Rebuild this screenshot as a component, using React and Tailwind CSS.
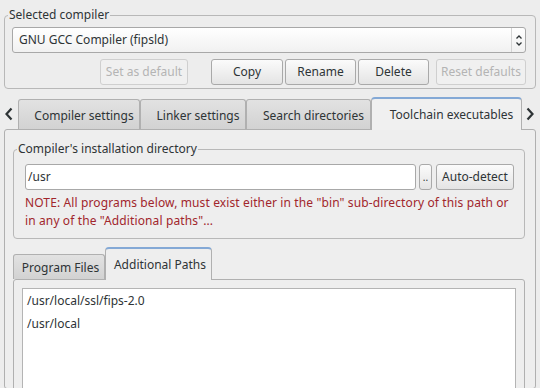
import React from "react";

const Btn = ({ children, w, className = "", disabled }) => (
    <div
        className={
            "h-[26px] flex items-center justify-center rounded-[3px] border " +
            (disabled
                ? "border-[#cfcfcf] bg-[#f0f0f0] text-[#b4b4b4] "
                : "border-[#a9a9a9] bg-gradient-to-b from-[#fbfbfb] to-[#e4e4e4] text-[#2e3436] ") +
            w +
            " " +
            className
        }
    >
        {children}
    </div>
);

const Chevron = ({ dir }) => (
    <svg width="10" height="14" viewBox="0 0 10 14" className="text-[#2e3436]">
        <polyline
            points={dir === "left" ? "7.5,1.5 2.5,7 7.5,12.5" : "2.5,1.5 7.5,7 2.5,12.5"}
            fill="none"
            stroke="currentColor"
            strokeWidth="2.2"
        />
    </svg>
);

const Tab = ({ label, w, active }) =>
    active ? (
        <div
            className={
                "relative z-10 -mb-px h-[33px] flex items-center justify-center pl-[10px] rounded-t-[4px] border border-b-0 border-[#b0b0b0] border-t-2 border-t-[#84a9d6] bg-[#f0f0f0] " +
                w
            }
        >
            {label}
        </div>
    ) : (
        <div
            className={
                "h-[30px] flex items-center justify-center pl-[10px] pt-[3px] rounded-t-[3px] border border-b-0 border-[#b0b0b0] bg-gradient-to-b from-[#e2e2e2] to-[#d2d2d2] " +
                w
            }
        >
            {label}
        </div>
    );

export default function App() {
    return (
        <div className="w-[540px] h-[388px] overflow-hidden bg-[#ededed] font-['Noto_Sans',sans-serif] text-[12px] text-[#2e3436]">
            {/* Selected compiler */}
            <fieldset className="mx-[4px] mt-[7px] p-0 border border-[#b8b8b8] rounded-[4px]">
                <legend className="ml-[3px] px-[1px] leading-[16px]">Selected compiler</legend>
                <div className="pl-[7px] pr-[9px] pt-[4px] pb-[3px]">
                    <div className="h-[26px] flex items-center border border-[#a8a8a8] rounded-[3px] bg-gradient-to-b from-white to-[#f1f1f1] pl-[6px]">
                        <span>GNU GCC Compiler (fipsld)</span>
                        <div className="ml-auto h-full border-l border-[#d4d4d4] w-[14px] flex items-center justify-center">
                            <svg width="8" height="13" viewBox="0 0 8 13">
                                <polyline points="1.5,4.5 4,2 6.5,4.5" fill="none" stroke="#2e3436" strokeWidth="1.3" />
                                <polyline points="1.5,8.5 4,11 6.5,8.5" fill="none" stroke="#2e3436" strokeWidth="1.3" />
                            </svg>
                        </div>
                    </div>
                    <div className="mt-[6px] flex">
                        <Btn w="w-[88px]" className="ml-[88px]" disabled>
                            Set as default
                        </Btn>
                        <Btn w="w-[72px]" className="ml-[23px]">
                            Copy
                        </Btn>
                        <Btn w="w-[71px]" className="ml-[2px]">
                            Rename
                        </Btn>
                        <Btn w="w-[71px]" className="ml-[2px]">
                            Delete
                        </Btn>
                        <Btn w="w-[90px]" className="ml-[7px]" disabled>
                            Reset defaults
                        </Btn>
                    </div>
                </div>
            </fieldset>

            {/* Main notebook tabs */}
            <div className="mt-[8px] flex items-end h-[32px]">
                <div className="w-[18px] h-full flex items-center justify-center pt-[1px]">
                    <Chevron dir="left" />
                </div>
                <Tab label="Compiler settings" w="w-[122px]" />
                <Tab label="Linker settings" w="w-[106px]" />
                <Tab label="Search directories" w="w-[125px]" />
                <Tab label="Toolchain executables" w="w-[151px]" active />
                <div className="w-[16px] h-full flex items-center justify-center pt-[1px]">
                    <Chevron dir="right" />
                </div>
            </div>

            {/* Main pane */}
            <div className="mx-[4px] h-[260px] border border-[#b0b0b0] rounded-[3px] bg-[#eeeeee]">
                <fieldset className="ml-[8px] mr-[10px] mt-[11px] p-0 border border-[#b8b8b8] rounded-[4px]">
                    <legend className="ml-[3px] px-[1px] leading-[16px]">Compiler's installation directory</legend>
                    <div className="pl-[11px] pt-[7px] pb-[8px]">
                        <div className="flex">
                            <div className="w-[391px] h-[26px] flex items-center pl-[2px] bg-white border border-[#a8a8a8] rounded-[3px]">
                                /usr
                            </div>
                            <Btn w="w-[13px]" className="ml-[3px] items-end pb-[4px] text-[10px]">
                                ..
                            </Btn>
                            <Btn w="w-[78px]" className="ml-[4px]">
                                Auto-detect
                            </Btn>
                        </div>
                        <p className="mt-[4px] leading-[18px] tracking-[0.12px] text-[#a1262c]">
                            NOTE: All programs below, must exist either in the &quot;bin&quot; sub-directory of this path or
                            <br />
                            in any of the &quot;Additional paths&quot;...
                        </p>
                    </div>
                </fieldset>

                {/* Sub notebook */}
                <div className="mt-[8px] ml-[8px] flex items-end h-[32px]">
                    <div className="h-[25px] w-[92px] flex items-center justify-center pl-[3px] pt-[1px] rounded-t-[3px] border border-b-0 border-[#b0b0b0] bg-gradient-to-b from-[#e2e2e2] to-[#d2d2d2]">
                        Program Files
                    </div>
                    <div className="relative z-10 -mb-px h-[33px] w-[107px] flex items-center justify-center pl-[3px] rounded-t-[4px] border border-b-0 border-[#b0b0b0] border-t-2 border-t-[#84a9d6] bg-[#eeeeee]">
                        Additional Paths
                    </div>
                </div>
                <div className="ml-[8px] mr-[10px] h-[120px] border border-[#b0b0b0] rounded-[3px] bg-[#eeeeee] px-[8px] pt-[8px]">
                    <div className="h-[110px] bg-white border border-[#b4b4b4] pl-[4px] leading-[23px]">
                        <div>/usr/local/ssl/fips-2.0</div>
                        <div>/usr/local</div>
                    </div>
                </div>
            </div>
        </div>
    );
}
